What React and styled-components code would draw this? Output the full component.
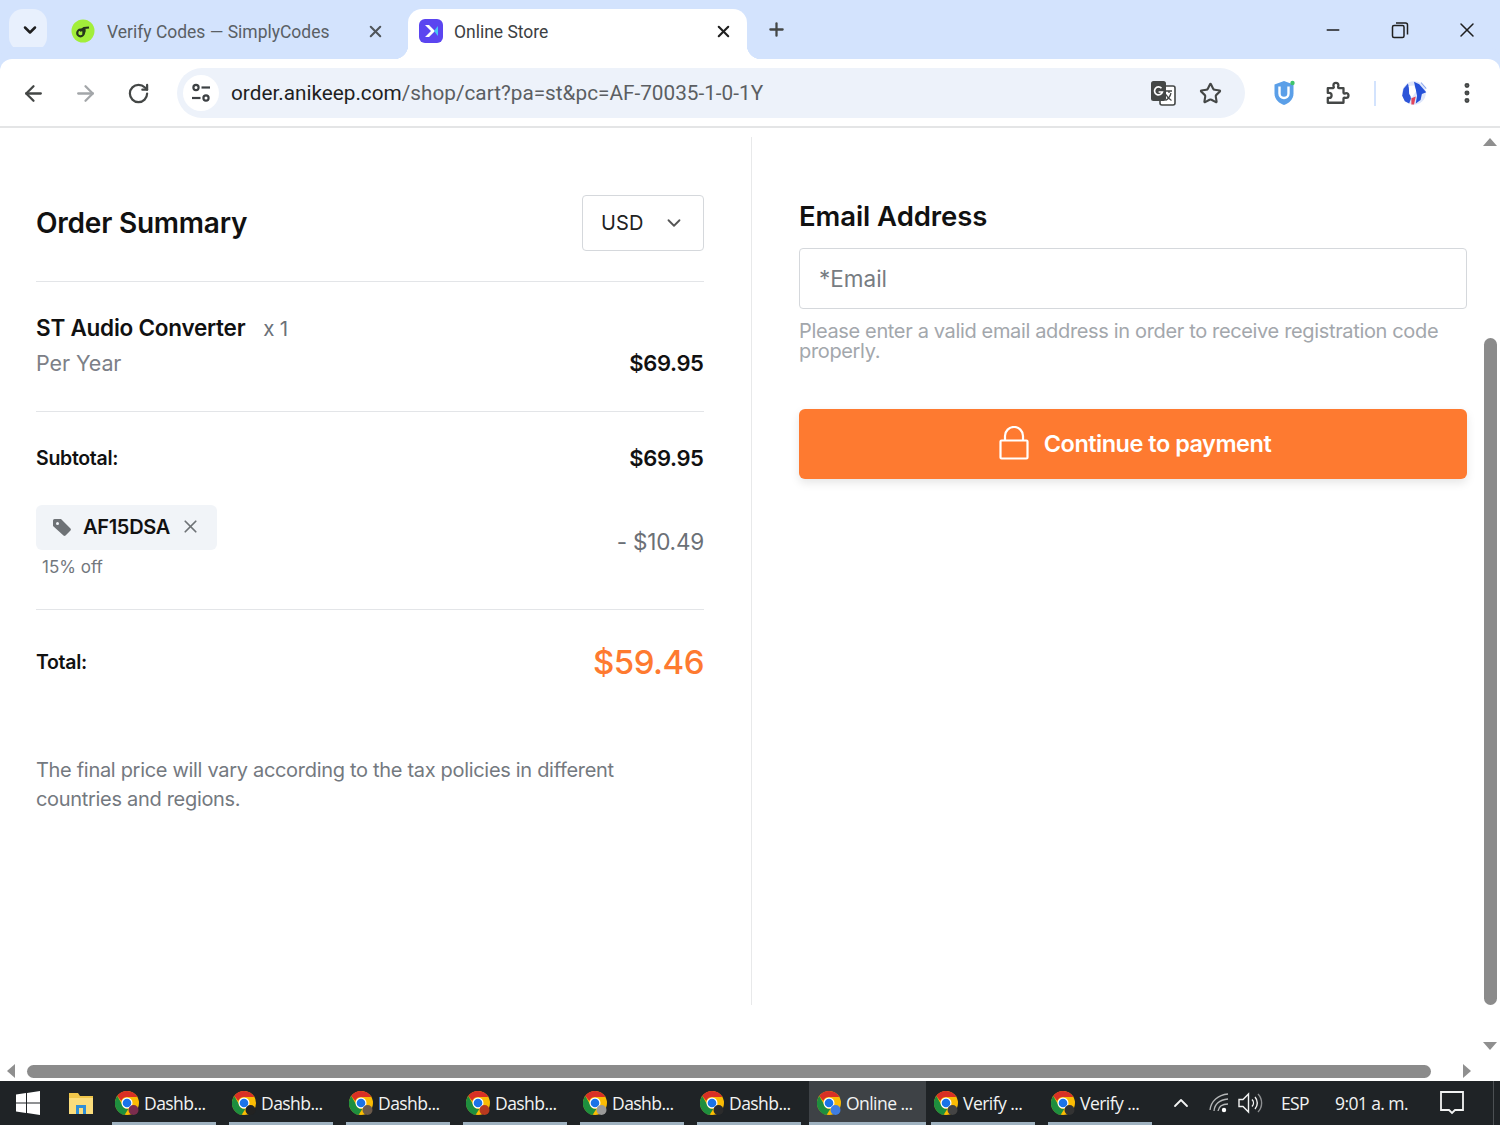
import React from 'react'
import styled, { createGlobalStyle } from 'styled-components'
import {
	ArrowLeft,
	ArrowRight,
	RotateCw,
	Star,
	X,
	Plus,
	ChevronDown,
	ChevronUp,
	Minus,
	EllipsisVertical,
} from 'lucide-react'

const GlobalStyle = createGlobalStyle`
	html, body {
		margin: 0;
		padding: 0;
		background: #fff;
	}
	* {
		box-sizing: border-box;
	}
`

const Page = styled.div`
	width: 1500px;
	height: 1125px;
	overflow: hidden;
	display: flex;
	flex-direction: column;
	background: #fff;
	font-family: Inter, 'Liberation Sans', sans-serif;
`

/* browser chrome */
const TabStrip = styled.div`
	height: 59px;
	flex: none;
	display: flex;
	align-items: flex-end;
	padding-left: 9px;
	background: #d3e3fd;
	font-family: Roboto, 'Liberation Sans', sans-serif;
`

const TabSearch = styled.div`
	width: 38px;
	height: 42px;
	margin-bottom: 8px;
	padding-left: 3px;
	display: flex;
	align-items: center;
	justify-content: center;
	border-radius: 14px;
	background: #e8f0fd;
	color: #1f1f1f;
`

const Tab = styled.div`
	position: relative;
	width: ${(p) => p.$width}px;
	height: 50px;
	margin-left: ${(p) => p.$left}px;
	padding: 0 ${(p) => p.$end}px 6px ${(p) => p.$pad}px;
	display: flex;
	align-items: center;
	border-radius: 14px 14px 0 0;
	background: ${(p) => (p.$active ? '#fff' : 'transparent')};
	color: ${(p) => (p.$active ? '#3c4043' : '#5a5f65')};

	${(p) =>
		p.$active &&
		`
		&::before, &::after {
			content: '';
			position: absolute;
			bottom: 0;
			width: 14px;
			height: 14px;
		}
		&::before {
			left: -14px;
			background: radial-gradient(circle at 0 0, transparent 14px, #fff 14.5px);
		}
		&::after {
			right: -14px;
			background: radial-gradient(circle at 100% 0, transparent 14px, #fff 14.5px);
		}
	`}
`

const TabTitle = styled.span`
	flex: 1;
	margin-left: ${(p) => p.$gap}px;
	font-size: 19px;
	white-space: nowrap;
	transform: scaleX(0.92);
	transform-origin: left center;
`

const TabClose = styled.div`
	display: flex;
	color: ${(p) => (p.$active ? '#1f1f1f' : '#50555a')};
`

const NewTab = styled.div`
	margin: 0 0 9px 19px;
	height: 42px;
	display: flex;
	align-items: center;
	color: #444746;
`

const WindowControls = styled.div`
	margin-left: auto;
	height: 59px;
	display: flex;
	align-items: center;
	padding: 0 21px 0 0;
	gap: 43px;
	color: #1f1f1f;
`

const WindowButton = styled.div`
	width: 24px;
	display: flex;
	justify-content: center;
`

const Toolbar = styled.div`
	height: 69px;
	flex: none;
	display: flex;
	align-items: center;
	padding: 1px 0 0 20px;
	background: #fff;
	border-radius: 12px 12px 0 0;
	border-bottom: 2px solid #e4e5e6;
	color: #444746;
	box-shadow: 0 -12px 0 #d3e3fd;
`

const NavButton = styled.div`
	width: 26px;
	margin-right: ${(p) => p.$right}px;
	display: flex;
	justify-content: center;
	color: ${(p) => (p.$off ? '#a3a6a9' : '#444746')};
`

const Omnibox = styled.div`
	width: 1068px;
	height: 50px;
	display: flex;
	align-items: center;
	padding: 0 23px 0 6px;
	border-radius: 25px;
	background: #edf2fa;
`

const SiteBadge = styled.div`
	width: 36px;
	height: 36px;
	flex: none;
	display: flex;
	align-items: center;
	justify-content: center;
	border-radius: 50%;
	background: #fff;
`

const Url = styled.div`
	flex: 1;
	margin-left: 12px;
	font-family: Roboto, 'Liberation Sans', sans-serif;
	font-size: 20.75px;
	color: #5b5e62;
	white-space: nowrap;

	b {
		font-weight: 400;
		color: #1f1f1f;
	}
`

const OmniIcons = styled.div`
	display: flex;
	align-items: center;
	gap: 22px;
`

const ToolbarIcons = styled.div`
	display: flex;
	align-items: center;
	margin-left: 25px;
	color: #444746;
`

const ToolDivider = styled.div`
	width: 2px;
	height: 25px;
	margin: 0 24px 0 23px;
	background: #d3e3fd;
`

const ToolSlot = styled.div`
	width: 28px;
	margin-right: ${(p) => p.$right || 0}px;
	display: flex;
	justify-content: center;
`

/* page content */
const Viewport = styled.div`
	flex: 1;
	min-height: 0;
	display: flex;
`

const Content = styled.div`
	width: 1480px;
	display: flex;
	align-items: flex-start;
	padding-top: 9px;
`

const LeftPane = styled.section`
	width: 752px;
	height: 868px;
	flex: none;
	padding: 58px 47px 0 36px;
	border-right: 1px solid #e8e9ea;
`

const SummaryHead = styled.div`
	height: 87px;
	display: flex;
	align-items: flex-start;
	justify-content: space-between;
	border-bottom: 1px solid #e3e5e8;
`

const Title = styled.h2`
	margin: 0;
	font-size: 28px;
	line-height: 57px;
	font-weight: 600;
	letter-spacing: -0.22px;
	color: #111;
`

const CurrencySelect = styled.div`
	width: 122px;
	height: 56px;
	display: flex;
	align-items: center;
	justify-content: space-between;
	padding: 0 18px;
	border: 1px solid #d5d8dc;
	border-radius: 4px;
	font-size: 20px;
	color: #222;
	letter-spacing: 0.2px;

	svg {
		color: #555;
	}
`

const ItemBlock = styled.div`
	height: 130px;
	padding-top: 28px;
	border-bottom: 1px solid #e3e5e8;
`

const Row = styled.div`
	display: flex;
	justify-content: space-between;
	align-items: ${(p) => p.$align || 'center'};
`

const ItemName = styled.div`
	font-size: 22.5px;
	line-height: 36px;
	font-weight: 600;
	letter-spacing: -0.24px;
	color: #111;

	span {
		margin-left: 18px;
		font-weight: 400;
		font-size: 20.5px;
		color: #6b7178;
	}
`

const Muted = styled.div`
	font-size: 21.5px;
	line-height: 32px;
	color: #7c8087;
	letter-spacing: -0.1px;
`

const Price = styled.div`
	font-size: 22px;
	font-weight: 600;
	letter-spacing: -0.4px;
	color: #111;
	margin-right: 0.5px;
`

const Label = styled.div`
	font-size: 19.5px;
	font-weight: 600;
	letter-spacing: -0.3px;
	color: #111;
`

const TotalsBlock = styled.div`
	height: 198px;
	padding-top: 28px;
	border-bottom: 1px solid #e3e5e8;
`

const SubtotalRow = styled(Row)`
	height: 36px;
	margin-bottom: 29px;
`

const CouponChip = styled.div`
	width: 181px;
	height: 45px;
	padding: 0 0 2px 16px;
	display: flex;
	align-items: center;
	border-radius: 6px;
	background: #f1f4f8;
	font-size: 20px;
	font-weight: 600;
	letter-spacing: -0.3px;
	color: #111;
`

const ChipText = styled.span`
	margin: 0 10px 0 11px;
`

const CouponNote = styled.div`
	margin: 6px 0 0 6px;
	font-size: 17px;
	line-height: 22px;
	color: #72777d;
`

const Discount = styled.div`
	margin-top: 23px;
	font-size: 22.5px;
	color: #6b7076;
	letter-spacing: -0.2px;
`

const TotalRow = styled(Row)`
	height: 104px;
`

const TotalPrice = styled.div`
	font-size: 33px;
	font-weight: 500;
	letter-spacing: -0.5px;
	color: #fe7a30;
`

const TaxNote = styled.p`
	margin: 42px 0 0;
	width: 620px;
	font-size: 20px;
	line-height: 29px;
	letter-spacing: -0.31px;
	color: #74797f;
`

const RightPane = styled.section`
	width: 668px;
	margin-left: 47px;
	padding-top: 58px;
`

const EmailTitle = styled.h2`
	margin: 0 0 11px;
	font-size: 27.5px;
	line-height: 42px;
	font-weight: 600;
	letter-spacing: -0.07px;
	color: #111;
`

const EmailField = styled.div`
	height: 61px;
	display: flex;
	align-items: center;
	padding-left: 19px;
	border: 1px solid #d5d8dc;
	border-radius: 4px;
	font-size: 22.5px;
	color: #777c82;
`

const Helper = styled.p`
	margin: 12px 0 48px;
	font-size: 20px;
	line-height: 20px;
	letter-spacing: -0.35px;
	color: #a3a7ac;
`

const PayButton = styled.div`
	height: 70px;
	padding: 0 0 2px 4px;
	display: flex;
	align-items: center;
	justify-content: center;
	gap: 15px;
	border-radius: 6px;
	background: #fe7a30;
	box-shadow: 0 4px 10px rgba(0, 0, 0, 0.1);
	font-size: 23.5px;
	font-weight: 600;
	letter-spacing: -0.5px;
	color: #fff;
`

/* scrollbars */
const VScroll = styled.div`
	width: 20px;
	flex: none;
	display: flex;
	flex-direction: column;
	align-items: center;
	padding-top: 10px;
`

const VThumb = styled.div`
	width: 13px;
	height: 667px;
	margin: 192px 0 37px;
	border-radius: 7px;
	background: #8b8b8b;
`

const Arrow = styled.div`
	width: 0;
	height: 0;
	${(p) =>
		p.$dir === 'up' &&
		'border-left: 7px solid transparent; border-right: 7px solid transparent; border-bottom: 8px solid #8f8f8f;'}
	${(p) =>
		p.$dir === 'down' &&
		'border-left: 7px solid transparent; border-right: 7px solid transparent; border-top: 8px solid #8f8f8f;'}
	${(p) =>
		p.$dir === 'left' &&
		'border-top: 7px solid transparent; border-bottom: 7px solid transparent; border-right: 8px solid #8f8f8f;'}
	${(p) =>
		p.$dir === 'right' &&
		'border-top: 7px solid transparent; border-bottom: 7px solid transparent; border-left: 8px solid #8f8f8f;'}
`

const HScroll = styled.div`
	height: 19px;
	flex: none;
	display: flex;
	align-items: center;
	padding: 0 0 1px 7px;
`

const HThumb = styled.div`
	width: 1404px;
	height: 13px;
	margin: 0 32px 0 12px;
	border-radius: 7px;
	background: #8b8b8b;
`

/* windows taskbar */
const Taskbar = styled.div`
	height: 44px;
	flex: none;
	display: flex;
	align-items: stretch;
	background: #1f2326;
	color: #f2f3f3;
	font-family: 'Open Sans', 'Liberation Sans', sans-serif;
`

const StartSlot = styled.div`
	width: 69px;
	padding-left: 16px;
	display: flex;
	align-items: center;
`

const ExplorerSlot = styled.div`
	width: 38px;
	display: flex;
	align-items: center;
	justify-content: flex-start;
`

const TaskItem = styled.div`
	position: relative;
	width: 117px;
	flex: none;
	padding-left: 8px;
	display: flex;
	align-items: center;
	gap: 4px;
	background: ${(p) => (p.$active ? '#3e4246' : 'transparent')};
	font-size: 17.5px;
	letter-spacing: -0.55px;
	white-space: nowrap;

	&::after {
		content: '';
		position: absolute;
		left: ${(p) => (p.$active ? 0 : 5)}px;
		right: ${(p) => (p.$active ? 0 : 8)}px;
		bottom: 0;
		height: 3px;
		background: #9fb2c0;
	}
`

const Tray = styled.div`
	flex: 1;
	display: flex;
	align-items: center;
	padding-left: 9px;
	font-size: 17.5px;
	letter-spacing: -0.6px;
	white-space: nowrap;
`

const TraySlot = styled.div`
	display: flex;
	align-items: center;
	flex: none;
	margin-left: ${(p) => p.$left || 0}px;
`

const TrayEdge = styled.div`
	width: 1px;
	height: 44px;
	margin-left: 28px;
	flex: none;
	background: #4c5053;
`

const TuneIcon = () => (
	<svg width="24" height="24" viewBox="0 0 24 24" fill="none" stroke="#3c4043" strokeWidth="2.2">
		<circle cx="7" cy="6.5" r="2.6" />
		<path d="M12.5 6.5H21" />
		<circle cx="17" cy="17" r="2.6" />
		<path d="M3 17h8.5" />
	</svg>
)

const TranslateIcon = () => (
	<svg width="27" height="27" viewBox="0 0 27 27">
		<rect x="10" y="6" width="15" height="19" rx="2" fill="#fff" stroke="#444746" strokeWidth="1.6" />
		<rect x="1" y="1" width="15" height="20" rx="2.5" fill="#444746" />
		<path d="M11.5 8.2A4 4 0 1 0 12.4 12H8.6" fill="none" stroke="#fff" strokeWidth="1.7" />
		<path d="M16 11h6M19 11v2M21 13c-.8 3.500-3 6-5.500 7.500M16 14.500c1 2.500 2.800 4.500 5.500 6" fill="none" stroke="#444746" strokeWidth="1.3" />
	</svg>
)

const ShieldIcon = () => (
	<svg width="26" height="28" viewBox="0 0 26 28">
		<path d="M13 2l9.500 3.500v9c0 6-4.500 9.800-9.500 11.500-5-1.700-9.500-5.500-9.500-11.500v-9z" fill="#5b9fe8" />
		<path d="M8.500 7.500v7c0 6 9 6 9 0v-7" fill="none" stroke="#fff" strokeWidth="2.400" />
		<circle cx="21.500" cy="4" r="2.200" fill="#3fc46b" />
	</svg>
)

const PuzzleIcon = () => (
	<svg width="26" height="26" viewBox="0 0 24 24" fill="none" stroke="#444746" strokeWidth="2.1" strokeLinejoin="round">
		<path d="M3.500 7.500h5a1 1 0 0 0 .5-.9c0-.6-.3-.9-.3-1.600a2.300 2.300 0 0 1 4.600 0c0 .7-.3 1-.3 1.600 0 .5.300.9.800.9H18v4.200c0 .5.400.8.900.8.600 0 1-.3 1.500-.3a2.200 2.200 0 0 1 0 4.400c-.5 0-.9-.3-1.500-.3-.5 0-.9.300-.9.800V21H3.500v-4.500h1.200a2.300 2.300 0 0 0 0-4.600H3.500z" />
	</svg>
)

const AvatarIcon = () => (
	<svg width="32" height="32" viewBox="0 0 32 32">
		<circle cx="16" cy="16" r="13.500" fill="#dfe7fb" />
		<path d="M9 5L4 11l-1.500 8 3 6.500 5 2.500 2-5.500-2-12z" fill="#2d55d8" />
		<path d="M16 3l6 3 8 9-5 2-1.500 7-5.500 4 1.500-9-2-9z" fill="#2450d8" />
		<path d="M10 8l6-.5 2.500 6.500-5 7-3-4z" fill="#fff" />
		<path d="M13 22l5-2-2 9h-3z" fill="#e2455b" />
		<path d="M24 4l6 7" stroke="#8aa6ee" strokeWidth="1.2" />
	</svg>
)

const SimplyIcon = () => (
	<svg width="24" height="24" viewBox="0 0 24 24">
		<circle cx="12" cy="12" r="11.500" fill="#a2ee3a" />
		<circle cx="9.500" cy="14" r="3.300" fill="none" stroke="#26351c" strokeWidth="2.200" />
		<path d="M9 12l4-3 5-.5M13 9c1 2 .5 4.500-1 6" fill="none" stroke="#26351c" strokeWidth="2.200" />
	</svg>
)

const StoreIcon = () => (
	<svg width="24" height="24" viewBox="0 0 24 24">
		<rect width="24" height="24" rx="6" fill="#5b45f0" />
		<path d="M6 6l6 6-6 6h4l6-6-6-6z" fill="#fff" />
		<path d="M19 7l-4 5 4 5z" fill="#46c6f5" />
	</svg>
)

const RestoreIcon = () => (
	<svg width="18" height="18" viewBox="0 0 18 18" fill="none" stroke="currentColor" strokeWidth="1.500">
		<rect x="1.500" y="4.500" width="11.500" height="12" rx="1.500" />
		<path d="M5 2h9.500A2 2 0 0 1 16.500 4v9.500" />
	</svg>
)

const TagIcon = () => (
	<svg width="20" height="20" viewBox="0 0 20 20">
		<path d="M1 3.500A1.500 1.500 0 0 1 2.500 2H9l9.500 9.500a1.500 1.500 0 0 1 0 2l-5 5a1.500 1.500 0 0 1-2 0L1 9z" fill="#6e7276" />
		<circle cx="5.500" cy="6.500" r="1.500" fill="#f1f4f8" />
	</svg>
)

const PadlockIcon = () => (
	<svg width="30" height="34" viewBox="0 0 30 34" fill="none" stroke="#fff" strokeWidth="2.200">
		<rect x="1.500" y="14.500" width="27" height="18" rx="1" />
		<path d="M6 14.500V10a9 9 0 0 1 18 0v4.500" />
	</svg>
)

const WindowsIcon = () => (
	<svg width="24" height="24" viewBox="0 0 24 24" fill="#fff">
		<path d="M0 3.500l10-1.400v9.300H0zM11 2l13-2v11.400H11zM0 12.500h10v9.400L0 20.500zM11 12.500h13V24l-13-2z" />
	</svg>
)

const ExplorerIcon = () => (
	<svg width="24" height="24" viewBox="0 0 24 24">
		<path d="M0 2h9l2 3h13v18H0z" fill="#f0c64a" />
		<path d="M0 7h24v16H0z" fill="#fbdd7c" />
		<path d="M7 14h10v9h-3v-6h-4v6H7z" fill="#2f8fd8" />
	</svg>
)

const ChromeIcon = ({ badge }) => (
	<svg width="25" height="25" viewBox="0 0 25 25">
		<circle cx="12" cy="12" r="12" fill="#fbbc04" />
		<path d="M12 0a12 12 0 0 1 10.400 6H12a6 6 0 0 0-5.700 4L2.300 5A12 12 0 0 1 12 0z" fill="#d93025" />
		<path d="M2.300 5l4.500 8a6 6 0 0 0 6.500 4.900L9.500 24A12 12 0 0 1 2.300 5z" fill="#1e8e3e" />
		<circle cx="12" cy="12" r="5.500" fill="#fff" />
		<circle cx="12" cy="12" r="4.300" fill="#1a73e8" />
		<circle cx="18.500" cy="19" r="5" fill={badge} />
	</svg>
)

const WifiIcon = () => (
	<svg width="22" height="22" viewBox="0 0 22 22" fill="none" stroke="#b5b7b8" strokeWidth="1.300">
		<path d="M2 18C3 9 10 3 20 2M6 19c.5-6 5-11 14-12M10 19c.5-3 3-7 10-7" />
		<circle cx="16" cy="18" r="2.200" fill="#fff" stroke="none" />
	</svg>
)

const SpeakerIcon = () => (
	<svg width="26" height="24" viewBox="0 0 26 24" fill="none" stroke="#f2f3f3" strokeWidth="1.400">
		<path d="M2 8.500h4L11.500 3v18L6 15.500H2z" />
		<path d="M15 8.500a5 5 0 0 1 0 7M18 6a9 9 0 0 1 0 12" />
		<path d="M21 3a13 13 0 0 1 0 18" stroke="#8d8f91" />
	</svg>
)

const NotifyIcon = () => (
	<svg width="26" height="26" viewBox="0 0 26 26" fill="none" stroke="#f2f3f3" strokeWidth="1.800">
		<path d="M2 2h22v18h-8l-3 3-3-3H2z" />
	</svg>
)

const TASKS = [
	{ label: 'Dashb...', badge: '#7b2d4e' },
	{ label: 'Dashb...', badge: '#222' },
	{ label: 'Dashb...', badge: '#6b5a4b' },
	{ label: 'Dashb...', badge: '#b8391f' },
	{ label: 'Dashb...', badge: '#9a9a9a' },
	{ label: 'Dashb...', badge: '#2b2b2b' },
	{ label: 'Online ...', badge: '#3f7de0', active: true },
	{ label: 'Verify ...', badge: '#444' },
	{ label: 'Verify ...', badge: '#333' },
]

export default function App() {
	return (
		<Page>
			<GlobalStyle />
			<TabStrip>
				<TabSearch>
					<ChevronDown size={20} strokeWidth={3} />
				</TabSearch>
				<Tab $width={357} $left={4} $pad={20} $end={23}>
					<SimplyIcon />
					<TabTitle $gap={12}>Verify Codes — SimplyCodes</TabTitle>
					<TabClose>
						<X size={19} strokeWidth={2.6} />
					</TabClose>
				</Tab>
				<Tab $active $width={339} $left={0} $pad={11} $end={14}>
					<StoreIcon />
					<TabTitle $gap={11}>Online Store</TabTitle>
					<TabClose $active>
						<X size={19} strokeWidth={2.6} />
					</TabClose>
				</Tab>
				<NewTab>
					<Plus size={21} strokeWidth={2.6} />
				</NewTab>
				<WindowControls>
					<WindowButton>
						<Minus size={20} strokeWidth={1.6} />
					</WindowButton>
					<WindowButton>
						<RestoreIcon />
					</WindowButton>
					<WindowButton>
						<X size={24} strokeWidth={1.5} />
					</WindowButton>
				</WindowControls>
			</TabStrip>

			<Toolbar>
				<NavButton $right={26}>
					<ArrowLeft size={25} strokeWidth={2.2} />
				</NavButton>
				<NavButton $off $right={27}>
					<ArrowRight size={25} strokeWidth={2.2} />
				</NavButton>
				<NavButton $right={26}>
					<RotateCw size={23} strokeWidth={2.3} />
				</NavButton>
				<Omnibox>
					<SiteBadge>
						<TuneIcon />
					</SiteBadge>
					<Url>
						<b>order.anikeep.com</b>/shop/cart?pa=st&amp;pc=AF-70035-1-0-1Y
					</Url>
					<OmniIcons>
						<TranslateIcon />
						<Star size={23} strokeWidth={2.2} color="#444746" />
					</OmniIcons>
				</Omnibox>
				<ToolbarIcons>
					<ToolSlot $right={25}>
						<ShieldIcon />
					</ToolSlot>
					<ToolSlot>
						<PuzzleIcon />
					</ToolSlot>
					<ToolDivider />
					<ToolSlot $right={25}>
						<AvatarIcon />
					</ToolSlot>
					<ToolSlot>
						<EllipsisVertical size={26} strokeWidth={2.6} />
					</ToolSlot>
				</ToolbarIcons>
			</Toolbar>

			<Viewport>
				<Content>
					<LeftPane>
						<SummaryHead>
							<Title>Order Summary</Title>
							<CurrencySelect>
								USD
								<ChevronDown size={22} strokeWidth={2} />
							</CurrencySelect>
						</SummaryHead>
						<ItemBlock>
							<ItemName>
								ST Audio Converter<span>x 1</span>
							</ItemName>
							<Row>
								<Muted>Per Year</Muted>
								<Price>$69.95</Price>
							</Row>
						</ItemBlock>
						<TotalsBlock>
							<SubtotalRow>
								<Label>Subtotal:</Label>
								<Price>$69.95</Price>
							</SubtotalRow>
							<Row $align="flex-start">
								<div>
									<CouponChip>
										<TagIcon />
										<ChipText>AF15DSA</ChipText>
										<X size={21} strokeWidth={2} color="#6e7276" />
									</CouponChip>
									<CouponNote>15% off</CouponNote>
								</div>
								<Discount>- $10.49</Discount>
							</Row>
						</TotalsBlock>
						<TotalRow>
							<Label>Total:</Label>
							<TotalPrice>$59.46</TotalPrice>
						</TotalRow>
						<TaxNote>
							The final price will vary according to the tax policies in different countries and regions.
						</TaxNote>
					</LeftPane>
					<RightPane>
						<EmailTitle>Email Address</EmailTitle>
						<EmailField>*Email</EmailField>
						<Helper>Please enter a valid email address in order to receive registration code properly.</Helper>
						<PayButton>
							<PadlockIcon />
							Continue to payment
						</PayButton>
					</RightPane>
				</Content>
				<VScroll>
					<Arrow $dir="up" />
					<VThumb />
					<Arrow $dir="down" />
				</VScroll>
			</Viewport>

			<HScroll>
				<Arrow $dir="left" />
				<HThumb />
				<Arrow $dir="right" />
			</HScroll>

			<Taskbar>
				<StartSlot>
					<WindowsIcon />
				</StartSlot>
				<ExplorerSlot>
					<ExplorerIcon />
				</ExplorerSlot>
				{TASKS.map((task, i) => (
					<TaskItem key={i} $active={task.active}>
						<ChromeIcon badge={task.badge} />
						{task.label}
					</TaskItem>
				))}
				<Tray>
					<ChevronUp size={24} strokeWidth={1.8} />
					<TraySlot $left={15}>
						<WifiIcon />
					</TraySlot>
					<TraySlot $left={7}>
						<SpeakerIcon />
					</TraySlot>
					<TraySlot $left={18}>ESP</TraySlot>
					<TraySlot $left={26}>9:01 a. m.</TraySlot>
					<TraySlot $left={31}>
						<NotifyIcon />
					</TraySlot>
					<TrayEdge />
				</Tray>
			</Taskbar>
		</Page>
	)
}
